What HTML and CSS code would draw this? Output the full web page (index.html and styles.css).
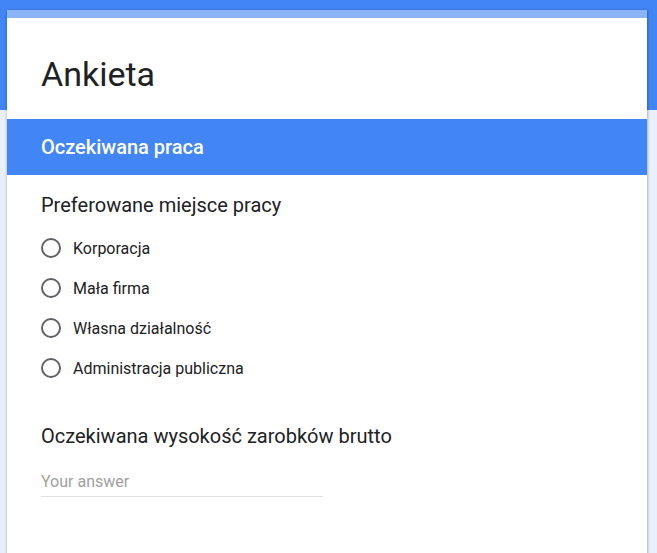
FILE: index.html
```html
<!DOCTYPE html>
<html lang="pl">
<head>
<meta charset="utf-8">
<title>Ankieta</title>
<link rel="stylesheet" href="styles.css">
</head>
<body>
<div class="page">
  <div class="card">
    <div class="title-area">
      <h1 class="title">Ankieta</h1>
    </div>
    <div class="section-header">Oczekiwana praca</div>
    <div class="section-body">
      <div class="question">
        <div class="q-title">Preferowane miejsce pracy</div>
        <div class="options">
          <label class="option"><span class="radio"></span><span class="opt-label">Korporacja</span></label>
          <label class="option"><span class="radio"></span><span class="opt-label">Mała firma</span></label>
          <label class="option"><span class="radio"></span><span class="opt-label">Własna działalność</span></label>
          <label class="option"><span class="radio"></span><span class="opt-label">Administracja publiczna</span></label>
        </div>
      </div>
      <div class="question q-second">
        <div class="q-title">Oczekiwana wysokość zarobków brutto</div>
        <div class="answer"><span class="placeholder">Your answer</span></div>
      </div>
    </div>
  </div>
</div>
</body>
</html>
```

FILE: styles.css
```css
html, body {
  margin: 0;
  padding: 0;
}
body {
  font-family: Roboto, "Noto Sans", Arial, sans-serif;
  background: #e9effb;
  overflow: hidden;
}
.page {
  min-height: 553px;
  background: linear-gradient(to bottom, #4285f4 0, #4285f4 110px, #e9effb 110px);
  padding: 10px 10px 0 7px;
  box-sizing: border-box;
}
.card {
  width: 640px;
  background: #fff;
  border-top: 8px solid #8ab4f8;
  box-shadow: 0 1px 3px rgba(0,0,0,0.25), 1px 0 2px rgba(0,0,0,0.12);
  padding-bottom: 80px;
}
.title-area {
  padding: 36px 34px 25px;
}
.title {
  margin: 0;
  font-size: 34px;
  line-height: 40px;
  font-weight: 400;
  color: #202124;
}
.section-header {
  background: #4285f4;
  color: #fff;
  font-size: 20px;
  font-weight: 500;
  line-height: 24px;
  padding: 16px 34px;
}
.section-body {
  padding: 18px 34px 0;
}
.q-title {
  font-size: 20px;
  line-height: 24px;
  color: #202124;
}
.options {
  display: flex;
  flex-direction: column;
  margin-top: 11px;
}
.option {
  display: flex;
  align-items: center;
  height: 40px;
  gap: 12px;
}
.radio {
  width: 16px;
  height: 16px;
  border: 2px solid #5f6368;
  border-radius: 50%;
  flex: none;
}
.opt-label {
  font-size: 16px;
  color: #202124;
}
.q-second {
  margin-top: 36px;
}
.answer {
  width: 282px;
  margin-top: 24px;
  border-bottom: 1px solid #e0e0e0;
  padding-bottom: 4px;
}
.placeholder {
  display: block;
  font-size: 16px;
  line-height: 20px;
  color: #a0a0a0;
}
```
